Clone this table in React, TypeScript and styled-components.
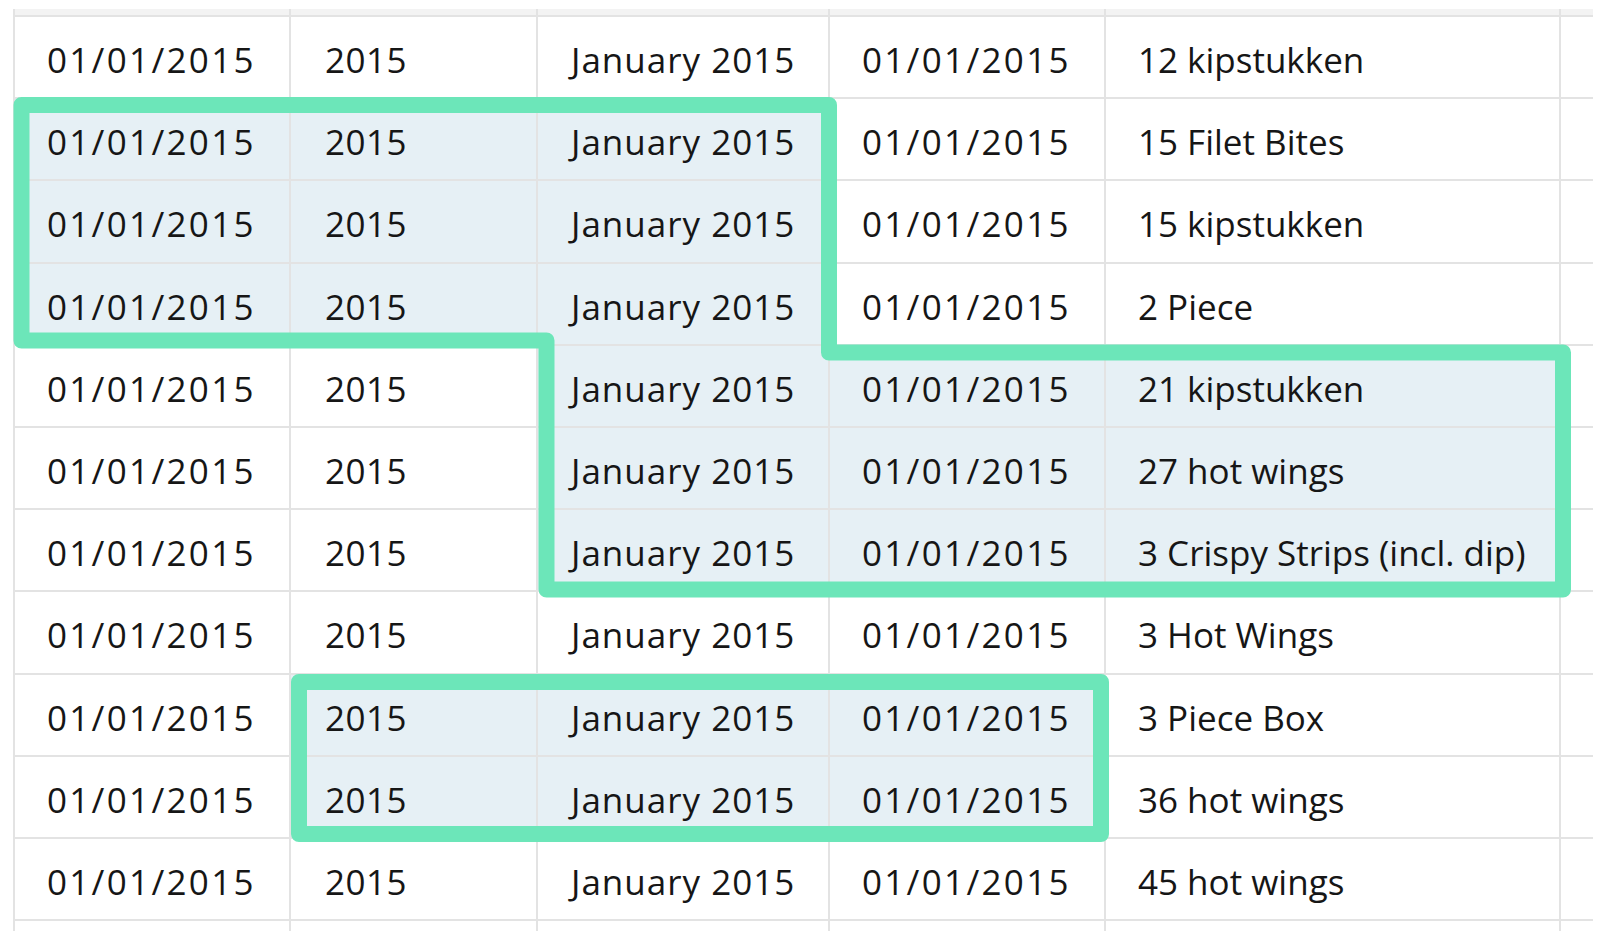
import React from "react";
import styled, { createGlobalStyle } from "styled-components";

const GlobalStyle = createGlobalStyle`
  html, body { margin: 0; padding: 0; background: #ffffff; }
  body { font-family: "Open Sans", "Noto Sans", sans-serif; }
`;

const LINE = "#e3e3e3";
const COLS = "276px 247px 292px 276px 455px 32px";

const Page = styled.div`
  position: relative;
  width: 1604px;
  height: 950px;
  padding: 9px 0 0 13px;
  box-sizing: border-box;
  overflow: hidden;
  background: #ffffff;
`;

const Sheet = styled.div`
  display: flex;
  flex-direction: column;
  width: 1580px;
  border-left: 2px solid ${LINE};
  box-sizing: border-box;
`;

const Row = styled.div<{ $h: number; $shade?: boolean; $open?: boolean }>`
  display: grid;
  grid-template-columns: ${COLS};
  height: ${(p) => p.$h}px;
  background: ${(p) => (p.$shade ? "#f3f3f3" : "#ffffff")};
  border-bottom: ${(p) => (p.$open ? "none" : `2px solid ${LINE}`)};
  box-sizing: border-box;
`;

const Cell = styled.div<{ $sel?: boolean; $last?: boolean; $track?: number; $indent?: number }>`
  display: flex;
  align-items: center;
  padding: 5px 0 0 ${(p) => p.$indent ?? 32}px;
  box-sizing: border-box;
  min-width: 0;
  overflow: hidden;
  white-space: nowrap;
  background: ${(p) => (p.$sel ? "#e6f0f5" : "transparent")};
  border-right: ${(p) => (p.$last ? "none" : `2px solid ${LINE}`)};
  font-size: 35px;
  letter-spacing: ${(p) => p.$track ?? 0}px;
  color: #161616;
`;

const Overlay = styled.svg`
  position: absolute;
  left: 0;
  top: 0;
  pointer-events: none;
`;

const items = [
  "12 kipstukken",
  "15 Filet Bites",
  "15 kipstukken",
  "2 Piece",
  "21 kipstukken",
  "27 hot wings",
  "3 Crispy Strips (incl. dip)",
  "3 Hot Wings",
  "3 Piece Box",
  "36 hot wings",
  "45 hot wings",
];

const tracking = [2.3, 0.5, 1.0, 2.3, 0];
const indents = [32, 34, 33, 32, 32];

const isSelected = (r: number, c: number) =>
  (r >= 1 && r <= 3 && c <= 2) ||
  (r >= 4 && r <= 6 && c >= 2 && c <= 4) ||
  (r >= 8 && r <= 9 && c >= 1 && c <= 3);

const ROW_H = 82.2;

export default function App() {
  return (
    <>
      <GlobalStyle />
      <Page>
        <Sheet>
          <Row $h={8} $shade>
            {Array.from({ length: 6 }).map((_, c) => (
              <Cell key={c} $last={c === 5} />
            ))}
          </Row>
          {items.map((item, r) => {
            const values = ["01/01/2015", "2015", "January 2015", "01/01/2015", item, ""];
            return (
              <Row key={r} $h={ROW_H}>
                {values.map((v, c) => (
                  <Cell
                    key={c}
                    $sel={isSelected(r, c)}
                    $last={c === 5}
                    $track={tracking[c]}
                    $indent={indents[c]}
                  >
                    {v}
                  </Cell>
                ))}
              </Row>
            );
          })}
          <Row $h={10} $open>
            {Array.from({ length: 6 }).map((_, c) => (
              <Cell key={c} $last={c === 5} />
            ))}
          </Row>
        </Sheet>
        <Overlay width={1604} height={950} viewBox="0 0 1604 950">
          <path
            d="M21.5 105 L829 105 L829 352.5 L1563 352.5 L1563 589.5 L546.5 589.5 L546.5 340.5 L21.5 340.5 Z"
            fill="none"
            stroke="#6ce6b9"
            strokeWidth={16}
            strokeLinejoin="round"
          />
          <path
            d="M299 682 L1101 682 L1101 834 L299 834 Z"
            fill="none"
            stroke="#6ce6b9"
            strokeWidth={16}
            strokeLinejoin="round"
          />
        </Overlay>
      </Page>
    </>
  );
}
